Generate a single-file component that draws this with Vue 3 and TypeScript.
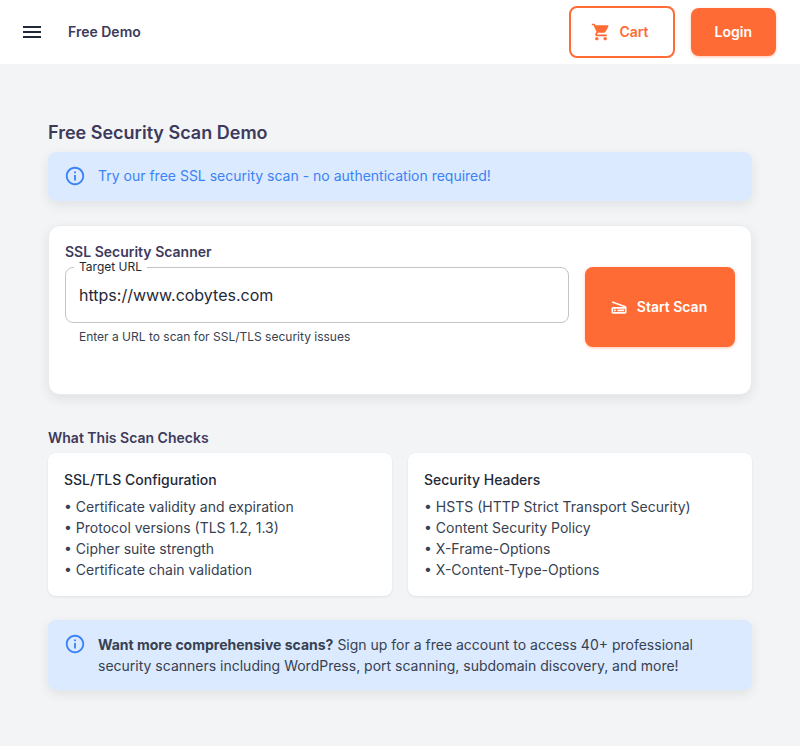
<script setup lang="ts">
interface CheckGroup {
  title: string
  items: string[]
}

const targetUrl = 'https://www.cobytes.com'

const groups: CheckGroup[] = [
  {
    title: 'SSL/TLS Configuration',
    items: [
      'Certificate validity and expiration',
      'Protocol versions (TLS 1.2, 1.3)',
      'Cipher suite strength',
      'Certificate chain validation',
    ],
  },
  {
    title: 'Security Headers',
    items: [
      'HSTS (HTTP Strict Transport Security)',
      'Content Security Policy',
      'X-Frame-Options',
      'X-Content-Type-Options',
    ],
  },
]

const infoPath =
  'M11 7h2v2h-2zM11 11h2v6h-2zM12 2C6.48 2 2 6.48 2 12s4.48 10 10 10 10-4.48 10-10S17.52 2 12 2zm0 18c-4.41 0-8-3.59-8-8s3.59-8 8-8 8 3.59 8 8-3.59 8-8 8z'
</script>

<template>
  <div class="page">
    <header class="topbar">
      <svg class="menu-icon" viewBox="0 0 24 24"><path d="M3 18h18v-2H3v2zm0-5h18v-2H3v2zm0-7v2h18V6H3z" /></svg>
      <span class="topbar-title">Free Demo</span>
      <button class="btn btn-outline">
        <svg class="btn-icon" viewBox="0 0 24 24"><path d="M7 18c-1.1 0-1.99.9-1.99 2S5.9 22 7 22s2-.9 2-2-.9-2-2-2zM1 2v2h2l3.6 7.59-1.35 2.45c-.16.28-.25.61-.25.96 0 1.1.9 2 2 2h12v-2H7.42c-.14 0-.25-.11-.25-.25l.03-.12.9-1.63h7.45c.75 0 1.41-.41 1.75-1.03l3.58-6.49c.08-.14.12-.31.12-.48 0-.55-.45-1-1-1H5.21l-.94-2H1zm16 16c-1.1 0-1.99.9-1.99 2s.89 2 1.99 2 2-.9 2-2-.9-2-2-2z" /></svg>
        Cart
      </button>
      <button class="btn btn-solid">Login</button>
    </header>

    <main class="content">
      <h1 class="page-title">Free Security Scan Demo</h1>
      <div class="alert alert-intro">
        <svg class="alert-icon" viewBox="0 0 24 24"><path :d="infoPath" /></svg>
        <div class="alert-text">Try our free SSL security scan - no authentication required!</div>
      </div>

      <section class="scanner">
        <h2 class="section-title">SSL Security Scanner</h2>
        <div class="scan-row">
          <div class="field">
            <fieldset class="field-box">
              <legend class="field-label">Target URL</legend>
              <input class="field-input" type="text" :value="targetUrl" />
            </fieldset>
            <p class="field-help">Enter a URL to scan for SSL/TLS security issues</p>
          </div>
          <button class="btn btn-solid btn-scan">
            <svg class="btn-icon" viewBox="0 0 24 24"><path d="M19.8 10.7L4.2 5l-.7 1.9L17.6 12H5c-1.1 0-2 .9-2 2v4c0 1.1.9 2 2 2h14c1.1 0 2-.9 2-2v-5.5c0-.8-.5-1.6-1.2-1.8zM19 18H5v-4h14v4zM6 15h2v2H6zm4 0h8v2h-8z" /></svg>
            Start Scan
          </button>
        </div>
      </section>

      <h2 class="section-title checks-title">What This Scan Checks</h2>
      <div class="checks">
        <article v-for="group in groups" :key="group.title" class="check-card">
          <h3 class="check-title">{{ group.title }}</h3>
          <div v-for="item in group.items" :key="item" class="check-item">• {{ item }}</div>
        </article>
      </div>

      <div class="alert alert-more">
        <svg class="alert-icon" viewBox="0 0 24 24"><path :d="infoPath" /></svg>
        <div class="alert-text">
          <strong>Want more comprehensive scans?</strong> Sign up for a free account to access 40+ professional
          security scanners including WordPress, port scanning, subdomain discovery, and more!
        </div>
      </div>
    </main>
  </div>
</template>

<style>
body {
  margin: 0;
  background: #f3f4f6;
}
</style>

<style scoped>
.page {
  box-sizing: border-box;
  min-height: 746px;
  background: #f3f4f6;
  color: #1f2937;
  font-family: Inter, 'Liberation Sans', sans-serif;
  font-size: 14px;
  line-height: 21px;
}

svg {
  display: block;
  flex: none;
  fill: currentColor;
}

h1,
h2,
h3,
p {
  margin: 0;
}

.topbar {
  display: flex;
  align-items: center;
  box-sizing: border-box;
  height: 64px;
  padding: 0 24px 0 20px;
  background: #fff;
}

.menu-icon {
  width: 24px;
  height: 24px;
  margin-right: 24px;
}

.topbar-title {
  flex: 1;
  padding-bottom: 1px;
  color: #3d3a5c;
  font-weight: 600;
}

.btn {
  display: flex;
  align-items: center;
  justify-content: center;
  box-sizing: border-box;
  margin: 0;
  border: 0;
  border-radius: 8px;
  padding: 12px 24px;
  font: 600 14px/24.5px Inter, 'Liberation Sans', sans-serif;
  white-space: nowrap;
}

.btn-outline {
  margin-right: 16px;
  border: 2px solid #ff6b35;
  background: #fff;
  color: #ff6b35;
}

.btn-solid {
  background: #ff6b35;
  color: #fff;
  box-shadow: 0 1px 3px rgba(255, 107, 53, 0.4);
}

.btn-icon {
  width: 20px;
  height: 20px;
  margin: 0 8px 0 -4px;
}

.content {
  padding: 56px 48px 0;
}

.page-title {
  color: #3d3a5c;
  font-size: 18px;
  font-weight: 600;
  line-height: 25px;
  margin-bottom: 6.5px;
}

.alert {
  display: flex;
  box-sizing: border-box;
  border-radius: 8px;
  padding: 6px 16px;
  background: #dbeafe;
  box-shadow: 0 4px 12px rgba(0, 0, 0, 0.08);
}

.alert-icon {
  width: 22px;
  height: 22px;
  margin: 7px 12px 0 0;
  color: #3b82f6;
}

.alert-text {
  padding: 8px 0;
}

.alert-intro {
  height: 49px;
  color: #3b82f6;
}

.alert-intro .alert-text {
  padding-top: 7.5px;
}

.alert-more {
  height: 70px;
  margin-top: 24px;
  color: #374151;
}

.scanner {
  box-sizing: border-box;
  height: 170.5px;
  margin-top: 24px;
  border: 1px solid #e9ebee;
  border-radius: 12px;
  padding: 15.5px 16px 16px;
  background: #fff;
  box-shadow: 0 4px 12px rgba(0, 0, 0, 0.08);
}

.section-title {
  color: #3d3a5c;
  font-size: 14px;
  font-weight: 600;
  line-height: 21px;
}

.scan-row {
  display: grid;
  grid-template-columns: 504px 150px;
  gap: 16px;
  margin-top: 5px;
}

.field-box {
  box-sizing: border-box;
  height: 62px;
  margin: -6px 0 0;
  border: 1px solid #c4c4c4;
  border-radius: 8px;
  padding: 0 13px;
}

.field-label {
  margin-left: -5px;
  padding: 0 5px;
  font-size: 12px;
  line-height: 12px;
}

.field-input {
  display: block;
  box-sizing: border-box;
  width: 100%;
  height: 23px;
  margin-top: 11px;
  border: 0;
  outline: 0;
  padding: 0;
  background: transparent;
  color: #1f2937;
  font: 400 16px/23px Inter, 'Liberation Sans', sans-serif;
}

.field-help {
  margin: 4px 14px 0;
  color: #374151;
  font-size: 12px;
  line-height: 20px;
}

.btn-scan {
  height: 79.5px;
}

.checks-title {
  margin-top: 32px;
}

.checks {
  display: grid;
  grid-template-columns: 1fr 1fr;
  gap: 16px;
  margin-top: 5px;
}

.check-card {
  box-sizing: border-box;
  height: 143px;
  border-radius: 8px;
  padding: 16px;
  background: #fff;
  box-shadow: 0 1px 3px rgba(0, 0, 0, 0.08);
}

.check-title {
  margin-bottom: 5px;
  font-size: 14px;
  font-weight: 500;
  line-height: 22px;
}

.check-item {
  color: #374151;
}
</style>
